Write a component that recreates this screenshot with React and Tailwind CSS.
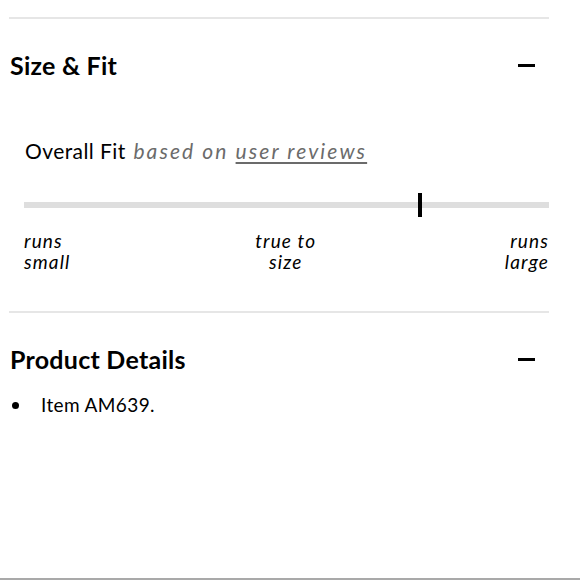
import React from 'react';

const Minus = () => <span className="block w-[17px] h-[3px] bg-black" />;

const App = () => {
  return (
    <div className="w-[580px] h-[580px] bg-white border-b-2 border-[#a9a9a9] font-['Lato',sans-serif] text-black overflow-hidden">
      <div className="ml-[9px] mr-[31px] pt-[17px]">
        <div className="border-t-2 border-[#e6e6e6]" />

        <div className="flex items-center justify-between pt-[32px] pr-[14px] pl-px">
          <h2 className="text-[25px] font-bold leading-[28px] tracking-[0.01em]">Size &amp; Fit</h2>
          <Minus />
        </div>

        <div className="pt-[60px] pl-[16px]">
          <p className="text-[21px] leading-[24px] tracking-[0.02em]">
            Overall Fit{' '}
            <span className="italic text-[#6b6b6b] tracking-[0.1em] ml-[2px]">
              based on <span className="underline underline-offset-[3px]">user reviews</span>
            </span>
          </p>
        </div>

        <div className="pl-[15px] pt-[39px]">
          <div className="relative h-[6px] bg-[#dedede]">
            <span className="absolute left-[394px] top-[-9px] w-[4px] h-[24px] bg-black" />
          </div>
        </div>

        <div className="flex justify-between pl-[15px] pt-[22px] text-[19px] leading-[21px] italic tracking-[0.06em]">
          <span>runs<br />small</span>
          <span className="text-center mr-[4px]">true to<br />size</span>
          <span className="text-right">runs<br />large</span>
        </div>

        <div className="border-t-2 border-[#e6e6e6] mt-[39px]" />

        <div className="flex items-center justify-between pt-[32px] pr-[14px] pl-px">
          <h2 className="text-[25px] font-bold leading-[28px] tracking-[0.01em]">Product Details</h2>
          <Minus />
        </div>

        <ul className="pt-[21px] text-[19px] leading-[22px] tracking-[0.02em]">
          <li className="flex items-center">
            <span className="w-[7px] h-[7px] rounded-full bg-black ml-[3px] mr-[22px]" />
            Item AM639.
          </li>
        </ul>
      </div>
    </div>
  );
};

export default App;
